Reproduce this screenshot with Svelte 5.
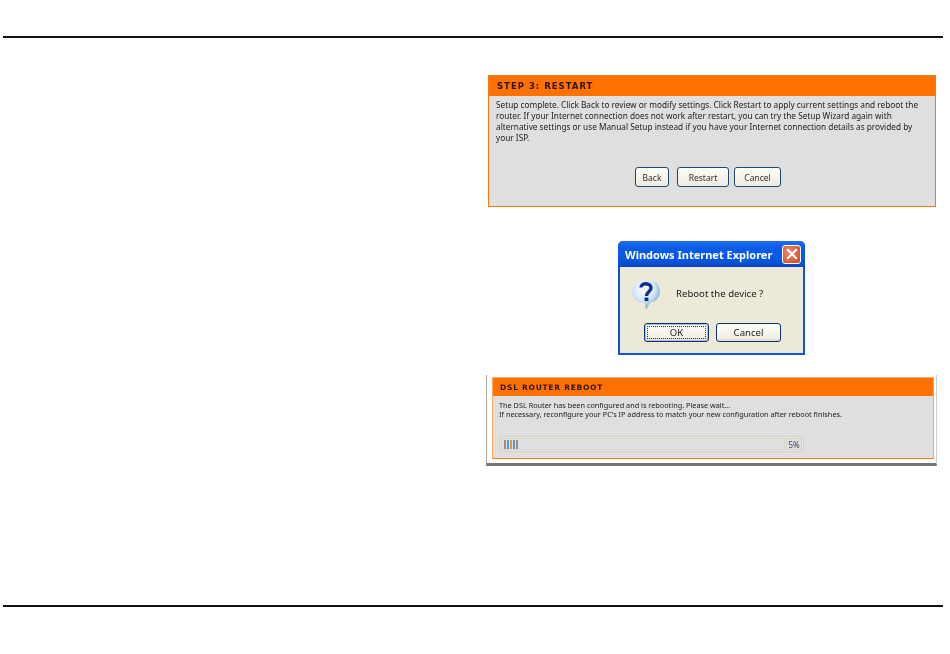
<script>
  const ticks = ['#8a8f98', '#5f97c6', '#d99a4e', '#5f97c6', '#8a8f98'];
</script>

<div class="page">
  <hr class="rule top" />

  <div class="column">
    <section class="panel setup">
      <h2>STEP 3: RESTART</h2>
      <div class="panel-body">
        <p>Setup complete. Click Back to review or modify settings. Click Restart to apply current settings and reboot the<br />router. If your Internet connection does not work after restart, you can try the Setup Wizard again with<br />alternative settings or use Manual Setup instead if you have your Internet connection details as provided by<br />your ISP.</p>
        <div class="actions">
          <button class="back">Back</button>
          <button class="restart">Restart</button>
          <button class="cancel">Cancel</button>
        </div>
      </div>
    </section>

    <div class="dialog">
      <div class="titlebar">
        <span>Windows Internet Explorer</span>
        <span class="close">
          <svg viewBox="0 0 12 12" width="12" height="12">
            <path d="M2 2 L10 10 M10 2 L2 10" stroke="#fff" stroke-width="2.2" stroke-linecap="square" />
          </svg>
        </span>
      </div>
      <div class="dialog-body">
        <div class="message">
          <svg class="question" viewBox="0 0 32 32" width="32" height="32">
            <defs>
              <radialGradient id="bubble" cx="0.42" cy="0.32" r="0.72">
                <stop offset="0" stop-color="#ffffff" />
                <stop offset="0.55" stop-color="#d3e5f5" />
                <stop offset="1" stop-color="#6f9cc8" />
              </radialGradient>
            </defs>
            <path d="M16 1 C24 1 30 6 30 13.5 C30 19.5 26 23.5 20.5 24.5 L16 31.5 L14.5 25 C7 25 2 20 2 13.5 C2 6 8 1 16 1 Z" fill="url(#bubble)" />
            <path d="M11 9.5 C11 4.5 21 4.5 21 10 C21 13.5 16.5 13.5 16.5 18" fill="none" stroke="#10308c" stroke-width="3.4" />
            <rect x="14.6" y="19.5" width="3.8" height="3.6" fill="#10308c" />
          </svg>
          <span>Reboot the device ?</span>
        </div>
        <div class="dialog-actions">
          <button class="xp ok"><span>OK</span></button>
          <button class="xp">Cancel</button>
        </div>
      </div>
    </div>

    <div class="shot">
      <section class="panel reboot">
        <h2>DSL ROUTER REBOOT</h2>
        <div class="panel-body">
          <p>The DSL Router has been configured and is rebooting. Please wait...<br />If necessary, reconfigure your PC's IP address to match your new configuration after reboot finishes.</p>
          <div class="progress">
            <div class="track">
              {#each ticks as tick}
                <i style="background: {tick}"></i>
              {/each}
            </div>
            <div class="percent">5%</div>
          </div>
        </div>
      </section>
    </div>
  </div>

  <hr class="rule bottom" />
</div>

<style>
  :global(body) {
    margin: 0;
    background: #fff;
  }

  .page {
    width: 950px;
    height: 654px;
    padding-top: 36px;
    box-sizing: border-box;
    font-family: "Noto Sans", "DejaVu Sans", sans-serif;
    color: #222;
    overflow: hidden;
  }

  .rule {
    height: 2px;
    width: 940px;
    margin: 0 0 0 3px;
    border: 0;
    background: #111;
  }

  .rule.bottom {
    margin-top: 139px;
  }

  .column {
    margin: 37px 0 0 486px;
    width: 452px;
    display: flex;
    flex-direction: column;
    filter: blur(0.3px);
  }

  .panel {
    background: #dfdfdf;
    border: 1px solid #f57a1c;
    box-sizing: border-box;
  }

  .panel h2 {
    margin: 0;
    background: #ff7100;
    color: #2b1300;
    font-family: "DejaVu Sans", sans-serif;
    font-weight: 700;
    white-space: nowrap;
  }

  .panel p {
    margin: 0;
    white-space: nowrap;
  }

  .setup {
    width: 448px;
    height: 132px;
    margin-left: 2px;
  }

  .setup h2 {
    height: 20px;
    line-height: 21px;
    padding-left: 8px;
    font-size: 8.5px;
    letter-spacing: 1px;
  }

  .setup .panel-body {
    padding: 3px 7px 0;
  }

  .setup p {
    font-size: 8.25px;
    line-height: 11px;
    color: #1c1c1c;
  }

  .actions {
    margin-top: 24px;
    display: flex;
    padding-left: 139px;
  }

  .actions button {
    height: 20px;
    padding: 0;
    background: linear-gradient(#fdfdf8, #eeeade);
    border: 1px solid #1f4a6e;
    border-radius: 3px;
    font: 8.5px "Noto Sans", "DejaVu Sans", sans-serif;
    color: #333;
  }

  .back { width: 34px; margin-right: 8px; }
  .restart { width: 52px; margin-right: 5px; }
  .cancel { width: 47px; }

  .dialog {
    width: 187px;
    height: 114px;
    margin: 34px 0 0 132px;
    box-sizing: border-box;
    display: flex;
    flex-direction: column;
    background: #0a55e0;
    border-radius: 5px 5px 0 0;
    padding: 0 2px 2px;
  }

  .titlebar {
    height: 26px;
    flex: none;
    margin: 0 -2px;
    padding: 0 4px 0 7px;
    display: flex;
    align-items: center;
    justify-content: space-between;
    background: linear-gradient(#1f6ef0, #0a5ae6 30%, #0b58e2 70%, #0a48c4);
    border-radius: 5px 5px 0 0;
    color: #fff;
    font-family: "Noto Sans", sans-serif;
    font-size: 11px;
    font-weight: 700;
    white-space: nowrap;
  }

  .close {
    width: 19px;
    height: 19px;
    display: flex;
    align-items: center;
    justify-content: center;
    background: radial-gradient(circle at 35% 35%, #ea8a6c, #d2431c);
    border: 1px solid #fff;
    border-radius: 3px;
    box-sizing: border-box;
  }

  .dialog-body {
    flex: 1;
    background: #ece9d8;
    padding: 11px 0 0 10px;
  }

  .message {
    display: flex;
    align-items: center;
    gap: 14px;
    height: 32px;
    font-size: 9.6px;
    color: #222;
  }

  .message span {
    margin-top: -2px;
  }

  .question {
    flex: none;
  }

  .dialog-actions {
    margin: 13px 0 0 14px;
    display: flex;
    gap: 7px;
  }

  .xp {
    width: 65px;
    height: 19px;
    padding: 0;
    background: linear-gradient(#fefefb, #f3f1e6 80%, #dcd8c8);
    border: 1px solid #10336e;
    border-radius: 3px;
    font: 9.6px "Noto Sans", "DejaVu Sans", sans-serif;
    color: #222;
  }

  .ok {
    box-shadow: inset 0 0 0 1px #a9c0ea;
  }

  .ok span {
    display: block;
    margin: 2px;
    line-height: 11px;
    border: 1px dotted #333;
  }

  .shot {
    width: 451px;
    height: 91px;
    margin-top: 20px;
    box-sizing: border-box;
    padding: 2px 3px 0 5px;
    border-left: 1px solid #a8a8a8;
    border-right: 1px solid #cfcfcf;
    border-bottom: 3px solid #777;
  }

  .reboot {
    width: 442px;
    height: 82px;
    border-color: #f9a868;
    border-bottom-color: #f57a1c;
  }

  .reboot h2 {
    height: 18px;
    line-height: 19px;
    padding-left: 7px;
    font-size: 7.5px;
    letter-spacing: 0.75px;
  }

  .reboot .panel-body {
    padding: 5px 6px 0;
  }

  .reboot p {
    font-size: 7.3px;
    line-height: 9px;
    color: #1c1c1c;
  }

  .progress {
    margin-top: 17px;
    width: 305px;
    height: 16px;
    display: flex;
    box-sizing: border-box;
    border: 1px solid #d2d2c6;
    background: #e6e6da;
    padding: 1px;
    gap: 1px;
  }

  .track {
    flex: 1;
    display: flex;
    align-items: center;
    gap: 1px;
    padding-left: 2px;
    background: #dfdfdf;
    border: 1px solid #d4d4c8;
  }

  .track i {
    width: 2px;
    height: 9px;
  }

  .percent {
    width: 16px;
    box-sizing: border-box;
    border: 1px solid #d4d4c8;
    font-size: 8px;
    line-height: 11px;
    text-align: center;
    color: #445;
    background: #dfdfdf;
  }
</style>
